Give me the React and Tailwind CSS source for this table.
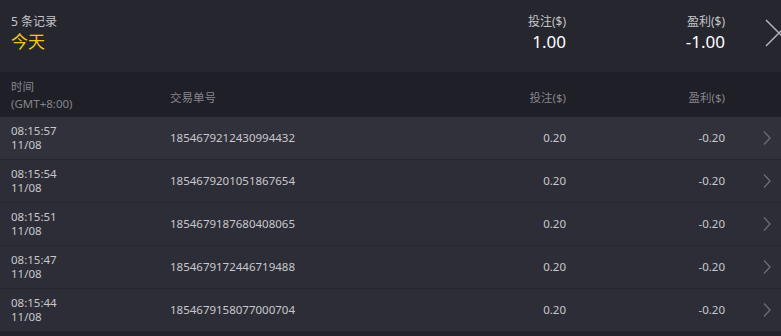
const ROWS = [
  { time: '08:15:57', date: '11/08', id: '1854679212430994432', bet: '0.20', profit: '-0.20' },
  { time: '08:15:54', date: '11/08', id: '1854679201051867654', bet: '0.20', profit: '-0.20' },
  { time: '08:15:51', date: '11/08', id: '1854679187680408065', bet: '0.20', profit: '-0.20' },
  { time: '08:15:47', date: '11/08', id: '1854679172446719488', bet: '0.20', profit: '-0.20' },
  { time: '08:15:44', date: '11/08', id: '1854679158077000704', bet: '0.20', profit: '-0.20' },
]

const GRID = 'grid grid-cols-[159px_1fr_150px_159px_56px] items-center'

function Chevron() {
  return (
    <svg className="h-[16px] w-[10px]" viewBox="0 0 10 16">
      <path d="M2 1.5 L8 8 L2 14.5" stroke="#6c6c76" strokeWidth="1.3" fill="none" />
    </svg>
  )
}

export default function App() {
  return (
    <div
      className="h-[336px] w-[781px] overflow-hidden bg-[#22222a] text-[#c8c8cc]"
      style={{ fontFamily: '"Noto Sans", "Noto Sans CJK SC", sans-serif' }}
    >
      {/* Summary header */}
      <header className="relative flex h-[72px] items-center bg-[#26262f] pb-[6px] pl-[11px]">
        <div className="flex w-[159px] flex-col">
          <span className="text-[12px] leading-[16px] text-[#c4c4c8]">5 条记录</span>
          <span className="text-[17px] leading-[23px] text-[#f3c623]">今天</span>
        </div>
        <div className="ml-auto flex w-[145px] flex-col items-end">
          <span className="text-[12px] leading-[16px] text-[#c4c4c8]">投注($)</span>
          <span className="text-[17px] leading-[23px] text-white">1.00</span>
        </div>
        <div className="flex w-[159px] flex-col items-end">
          <span className="text-[12px] leading-[16px] text-[#c4c4c8]">盈利($)</span>
          <span className="text-[17px] leading-[23px] text-white">-1.00</span>
        </div>
        <div className="w-[56px] self-stretch" />
        <svg className="absolute right-[-12px] top-[19px] h-[28px] w-[28px]" viewBox="0 0 28 28">
          <path d="M1 1 L27 27 M27 1 L1 27" stroke="#b4b4bc" strokeWidth="1.5" fill="none" />
        </svg>
      </header>

      {/* Column header */}
      <div className={`${GRID} h-[45px] bg-[#1f1f27] pl-[11px] text-[11.5px] text-[#85858c]`}>
        <div className="flex flex-col leading-[17px]">
          <span>时间</span>
          <span>(GMT+8:00)</span>
        </div>
        <span className="pt-[6px]">交易单号</span>
        <span className="pt-[6px] text-right">投注($)</span>
        <span className="pt-[6px] text-right">盈利($)</span>
        <span />
      </div>

      {/* Rows */}
      <div className="flex flex-col gap-px bg-[#26262e]">
        {ROWS.map((r, i) => (
          <div
            key={r.id}
            className={`${GRID} h-[42px] pl-[11px] ${i === 0 ? 'bg-[#31313b]' : 'bg-[#2d2d37]'}`}
          >
            <div className="flex flex-col text-[11.5px] leading-[14px] text-[#c8c8cc]">
              <span>{r.time}</span>
              <span>{r.date}</span>
            </div>
            <span className="text-[11.5px] text-[#c8c8cc]">{r.id}</span>
            <span className="text-right text-[11.5px] text-[#c8c8cc]">{r.bet}</span>
            <span className="text-right text-[11.5px] text-[#c8c8cc]">{r.profit}</span>
            <div className="flex justify-end pr-[9px]">
              <Chevron />
            </div>
          </div>
        ))}
      </div>
    </div>
  )
}
